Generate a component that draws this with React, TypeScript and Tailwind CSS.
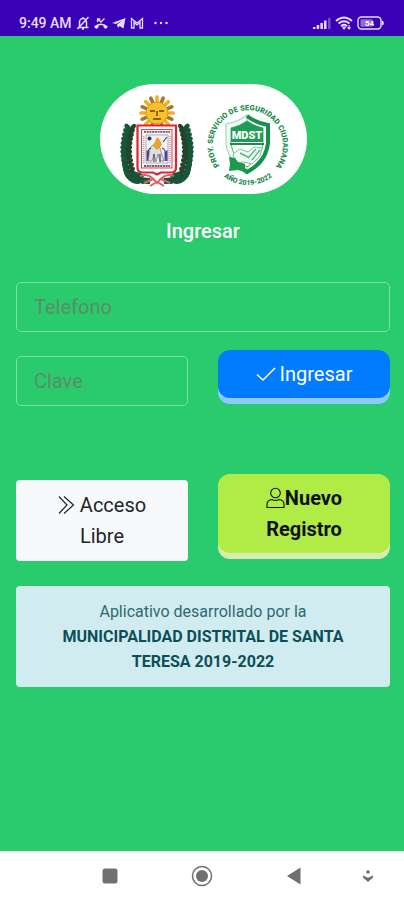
import React from 'react';

const rays = Array.from({ length: 16 }, (_, i) => i * 22.5);
const leaves = Array.from({ length: 12 }, (_, i) => i);

function Laurel() {
  return (
    <g fill="#17563a">
      <path d="M30 46C24 58 23 82 28 92C31 97 39 97 50 98" fill="none" stroke="#1b4d31" strokeWidth="6" />
      {leaves.map((i) => {
        const y = 44 + i * 4.3;
        const x = 30 - Math.sin((i / 11) * Math.PI) * 4;
        return (
          <g key={i}>
            <ellipse cx={x - 2.5} cy={y} rx="3.8" ry="2.4" transform={`rotate(48 ${x - 2.5} ${y})`} />
            <ellipse cx={x + 3} cy={y} rx="3.6" ry="2.2" transform={`rotate(-48 ${x + 3} ${y})`} fill="#24452b" />
          </g>
        );
      })}
      <ellipse cx="34" cy="97" rx="7" ry="3.2" transform="rotate(24 34 97)" />
      <ellipse cx="38" cy="92" rx="6" ry="2.6" transform="rotate(14 38 92)" />
      <ellipse cx="45" cy="98" rx="6" ry="2.6" transform="rotate(-8 45 98)" />
    </g>
  );
}

function Logo() {
  return (
    <svg viewBox="0 0 207 110" className="h-[110px] w-[207px]" role="img" aria-label="Municipalidad Distrital de Santa Teresa">
      {/* coat of arms */}
      {rays.map((a, i) => (
        <path key={a} d="M55.200 20L55.200 12.500Q57 9.500 58.800 12.500L58.800 20Z" fill={i % 2 ? '#a8742c' : '#f3b024'} transform={`rotate(${a} 57 29)`} />
      ))}
      <circle cx="57" cy="29" r="11" fill="#f8c02a" stroke="#d08a1c" strokeWidth=".7" />
      <path d="M50 27h5M59 27h5M57 27v5M53 35h8" stroke="#64400f" strokeWidth="1.400" fill="none" />
      <g transform="translate(0 -1)"><Laurel /></g>
      <g transform="matrix(-1 0 0 1 114 -1)"><Laurel /></g>
      <path d="M37.500 41.500h38.500v42q0 5-5 5h-10l-4 2l-4-2h-10.500q-5 0-5-5Z" fill="#fff" stroke="#da2532" strokeWidth="2.200" />
      <rect x="41.500" y="45.500" width="30.500" height="38.500" fill="#f5eef0" stroke="#d3474e" strokeWidth="1" />
      <path d="M44 47.800h26M44 82h26" stroke="#755b68" strokeWidth="1.800" strokeDasharray="2 .7" />
      <path d="M43.800 52v27M70 52v27" stroke="#9c8290" strokeWidth="1" strokeDasharray="1 1" />
      <path d="M46 51h22v28H46Z" fill="#eef1f6" stroke="#9c8290" strokeWidth=".6" />
      <path d="M46.500 66l3 2v9h-3ZM67.500 66l-3 2v9h3Z" fill="#5548a0" />
      <path d="M48 77l2-13 5-5 5 5 4 13h-4l-2-7-2 8-2-8-2 7Z" fill="#dcdce4" stroke="#66606c" strokeWidth=".6" />
      <path d="M53 62l4-9 3 3 2 5-5 5Z" fill="#eba22f" />
      <path d="M51 64q-4 1-3 9M62 64q4 1 4 9M67 53l-4 5M54 70v8M60 70v8" stroke="#45404d" strokeWidth="1.100" fill="none" />
      <circle cx="49.500" cy="54.500" r="2" fill="#353440" />
      <path d="M40 92c8-3 13 2 17 7c4-5 9-10 17-7M50 102l7-4 7 4M44 99l9-4M70 99l-9-4" stroke="#d9636b" strokeWidth="2" fill="none" />

      {/* citizen security badge */}
      <path id="ringTop" d="M119 81A35 35 0 1 1 176 82" fill="none" />
      <path id="ringBottom" d="M116 85A40 40 0 0 0 180 85" fill="none" />
      <g fill="#1d8e50" fontFamily="Roboto, sans-serif" fontWeight="900">
        <text fontSize="7.500"><textPath href="#ringTop" startOffset="50%" textAnchor="middle">PROY. SERVICIO DE SEGURIDAD CIUDADANA</textPath></text>
        <text fontSize="7"><textPath href="#ringBottom" startOffset="50%" textAnchor="middle">AÑO 2019-2022</textPath></text>
      </g>
      <path d="M147 31Q138 38 126 40v20q2 17 21 28Z" fill="#f3faf5" stroke="#a9d6bc" strokeWidth="1.200" />
      <path d="M147 32q9 7 21 9v18q-2 19-21 29q-5-3-9-7" fill="none" stroke="#14924b" strokeWidth="4" />
      <path d="M147 37q7 5 16 7v16q-2 14-16 23q-14-9-16-23V44q9-2 16-7Z" fill="#fff" stroke="#4db077" strokeWidth="1" />
      <path d="M131 44q9-2 16-7q7 5 16 7v14h-32Z" fill="#1f9d57" />
      <text x="147" y="55" textAnchor="middle" fontFamily="Roboto, sans-serif" fontWeight="900" fontSize="11" fill="#fff">MDST</text>
      <path d="M130 60h34" stroke="#14924b" strokeWidth="2" />
      <path d="M133 70l7-5 8 3 6-5 8 1-2 8-8 8-9-2-8 1Z" fill="#f2faf5" stroke="#7cc598" strokeWidth="1" />
      <path d="M148 74l8-9M152 76l8-10M140 69l8 4" stroke="#5cb680" strokeWidth="1.400" />
      <path d="M129 73l6 1 3 4 7 2v8l-7-2-9 1 1-7Z" fill="#1f9851" />
    </svg>
  );
}

function StatusBar() {
  return (
    <header className="flex h-9 items-center justify-between bg-[#3a00b5] pt-2.5 pr-5 pl-[19px] text-[#e6dcff]">
      <div className="flex items-center gap-1">
        <span className="text-sm leading-5 font-medium">9:49 AM</span>
        <svg viewBox="0 0 14 14" className="size-3.5" fill="none" stroke="currentColor" strokeWidth="1.500">
          <path d="M1.500 11.500h11M3.500 11V6a3.500 3.500 0 0 1 7 0v5M6 13h2M7 1v2M1.500 13L12.500 1" />
        </svg>
        <svg viewBox="0 0 14 14" className="size-3.5" fill="currentColor">
          <path d="M0 10.500Q7 4.500 14 10.500L12 13L9.500 11.500V9.500Q7 8.800 4.500 9.500V11.500L2 13Z" />
          <path d="M3.500 6V2.800h3M4 3l3 3 3.500-3.500" fill="none" stroke="currentColor" strokeWidth="1.300" />
        </svg>
        <svg viewBox="0 0 14 14" className="size-3.5" fill="currentColor">
          <path d="M0 7L13.500 2L11.500 12.500L7.500 10L6 12L5 8.500L10.500 4.500L4 8Z" />
        </svg>
        <svg viewBox="0 0 14 14" className="size-3.5" fill="none" stroke="currentColor" strokeWidth="1.300">
          <path d="M1.500 12V2.500L7 7L12.500 2.500V12H10V6.500L7 9L4 6.500V12Z" />
        </svg>
        <svg viewBox="0 0 14 4" className="ml-1.5 h-1 w-3.5" fill="currentColor">
          <circle cx="1.500" cy="2" r="1.200" /><circle cx="7" cy="2" r="1.200" /><circle cx="12.500" cy="2" r="1.200" />
        </svg>
      </div>
      <div className="flex items-center gap-1">
        <svg viewBox="0 0 18 13" className="h-[13px] w-[18px]" fill="currentColor">
          <path d="M0 10h2.500v2H0ZM3.700 8h2.500v4h-2.500ZM7.400 6h2.500v6h-2.500ZM11 3.500h2.500V12h-2.500Z" />
          <path d="M15 1h2.500v11h-2.500Z" opacity=".35" />
        </svg>
        <svg viewBox="0 0 18 14" className="h-3.5 w-[18px]" fill="none" stroke="currentColor" strokeWidth="1.800">
          <path d="M1 5Q9-2 17 5M3.500 7.500Q9 3 14.500 7.500M6 10Q9 7.500 12 10" />
          <path d="M7.500 11L9 13L10.500 11ZM14 9v4M12.500 11.500l1.500 1.500 1.500-1.500" strokeWidth="1.100" />
        </svg>
        <svg viewBox="0 0 27 14" className="h-3.5 w-[27px]">
          <rect x="1" y="1" width="23" height="12" rx="3.500" fill="none" stroke="currentColor" strokeWidth="1.400" />
          <rect x="3.500" y="3.200" width="12" height="7.600" rx="1" fill="currentColor" opacity=".5" />
          <path d="M24.800 4.500q2 0 2 2.500t-2 2.500Z" fill="currentColor" />
          <text x="12.500" y="10" fontSize="8" fontWeight="700" textAnchor="middle" fill="#fff">54</text>
        </svg>
      </div>
    </header>
  );
}

function NavBar() {
  return (
    <nav className="grid h-[49px] grid-cols-[1fr_92px_92px_92px_1fr] items-center justify-items-center bg-white text-[#707070]" aria-label="Sistema">
      <button type="button" aria-label="Recientes" className="col-start-2">
        <svg viewBox="0 0 16 16" className="size-4" fill="currentColor"><rect x=".5" y=".5" width="15" height="15" rx="2.500" /></svg>
      </button>
      <button type="button" aria-label="Inicio">
        <svg viewBox="0 0 22 22" className="size-[22px]"><circle cx="11" cy="11" r="9.500" fill="none" stroke="currentColor" strokeWidth="1.500" /><circle cx="11" cy="11" r="6" fill="currentColor" /></svg>
      </button>
      <button type="button" aria-label="Atrás">
        <svg viewBox="0 0 14 18" className="h-[18px] w-3.5" fill="currentColor"><path d="M13.500 .5v17L0 9Z" /></svg>
      </button>
      <button type="button" aria-label="Ocultar barra" className="mr-2">
        <svg viewBox="0 0 12 14" className="h-3.5 w-3" fill="currentColor"><circle cx="6" cy="3" r="1.800" /><path d="M1 6.500L6 8.800L11 6.500V8.500L6 13L1 8.500Z" /></svg>
      </button>
    </nav>
  );
}

const fieldClass =
  'h-[50px] w-full min-w-0 rounded-[5px] border border-[#7ce0a1] bg-transparent px-[17px] text-xl text-[#495057] placeholder:text-[#5b8c6b] outline-none';

export default function App() {
  return (
    <div className="flex min-h-screen flex-col bg-[#2acb6d] font-[Roboto,sans-serif]">
      <StatusBar />
      <main className="flex-1 pr-3.5 pl-4">
        <div className="mx-auto mt-12 flex w-fit rounded-full bg-white">
          <Logo />
        </div>
        <h1 className="mt-[22px] text-center text-xl leading-[30px] font-medium text-white">Ingresar</h1>
        <form onSubmit={(e) => e.preventDefault()}>
          <input className={`${fieldClass} mt-9`} type="tel" placeholder="Telefono" aria-label="Telefono" />
          <div className="mt-[18px] grid grid-cols-2 gap-[30px]">
            <input className={`${fieldClass} mt-1.5`} type="password" placeholder="Clave" aria-label="Clave" />
            <button type="submit" className="flex h-12 items-center justify-center gap-1 rounded-xl bg-[#027bff] text-xl text-white shadow-[0_6px_0_#8fc8fa]">
              <svg viewBox="0 0 20 20" className="size-5" fill="none" stroke="currentColor" strokeWidth="1.500"><path d="M1 10.500L7 16L19 4" /></svg>
              Ingresar
            </button>
          </div>
          <div className="mt-[68px] grid grid-cols-2 items-start gap-[30px]">
            <button type="button" className="mt-1.5 rounded bg-[#f8f9fa] px-6 pt-2.5 pb-[9px] text-xl leading-[31px] text-[#212529]">
              <svg viewBox="0 0 18 20" className="mr-1 inline h-5 w-[18px] align-[-3px]" fill="none" stroke="currentColor" strokeWidth="1.200"><path d="M1 1.500L9 10L1 18.500M6 1.500L15.500 10L6 18.500" /></svg>
              Acceso Libre
            </button>
            <button type="button" className="rounded-xl bg-[#b0eb46] px-6 pt-[9px] pb-2 text-xl leading-[31px] font-bold text-[#111] shadow-[0_6px_0_#d7edad]">
              <svg viewBox="0 0 19 22" className="inline h-[22px] w-[19px] align-[-4px]" fill="none" stroke="currentColor" strokeWidth="1.100"><circle cx="9.500" cy="6" r="4.800" /><path d="M1 20.500V17.500Q1 13 6 12.500Q9.500 14.500 13 12.500Q18 13 18 17.500V20.500Z" /></svg>
              Nuevo Registro
            </button>
          </div>
        </form>
        <p className="mt-[25px] rounded bg-[#d1ecf0] px-9 py-[13px] text-center text-base leading-[25px] text-[#2f6973]">
          Aplicativo desarrollado por la{' '}
          <strong className="font-bold text-[#0c4f59]">MUNICIPALIDAD DISTRITAL DE SANTA TERESA 2019-2022</strong>
        </p>
      </main>
      <NavBar />
    </div>
  );
}
